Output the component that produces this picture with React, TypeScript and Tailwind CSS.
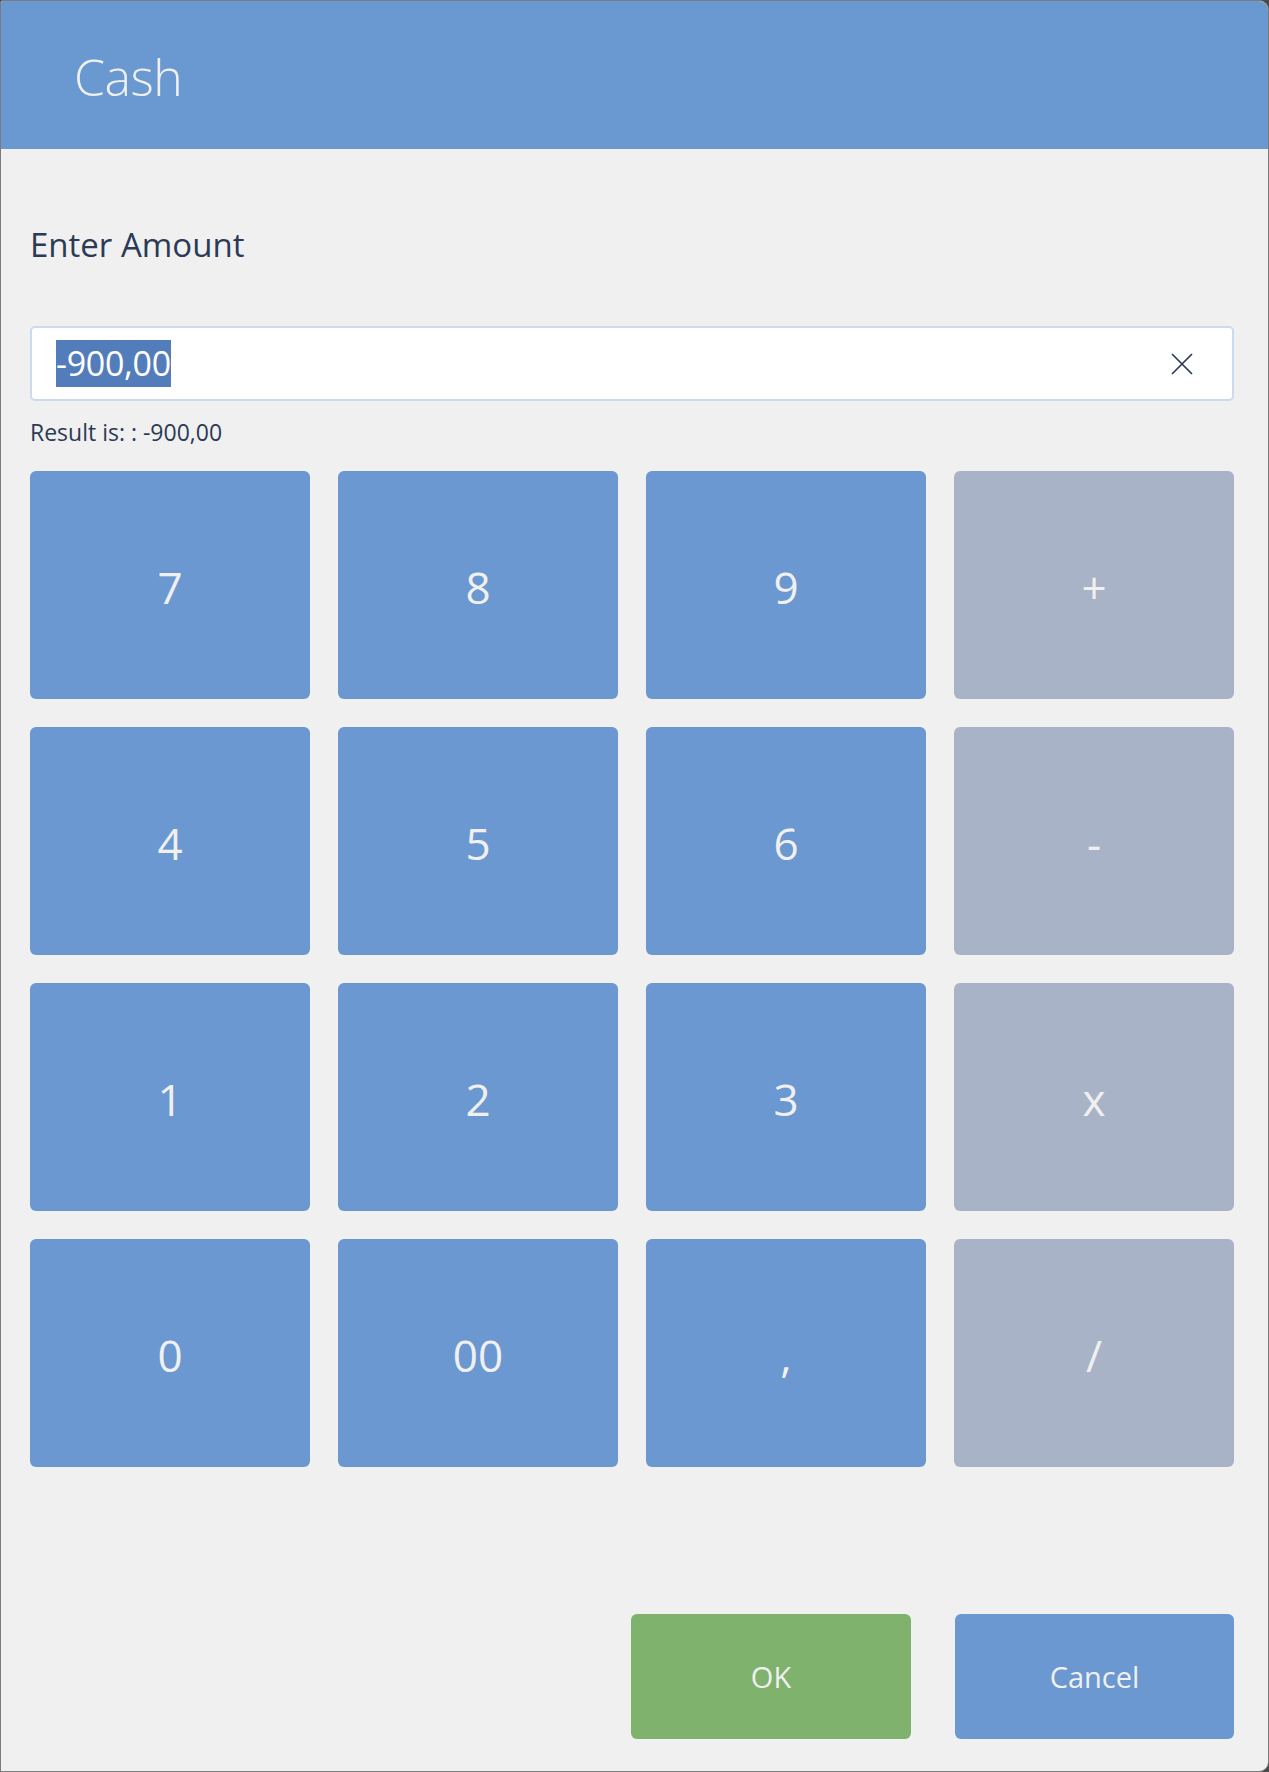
import React from 'react';

const keys = [
  { label: '7', op: false },
  { label: '8', op: false },
  { label: '9', op: false },
  { label: '+', op: true },
  { label: '4', op: false },
  { label: '5', op: false },
  { label: '6', op: false },
  { label: '-', op: true },
  { label: '1', op: false },
  { label: '2', op: false },
  { label: '3', op: false },
  { label: 'x', op: true },
  { label: '0', op: false },
  { label: '00', op: false },
  { label: ',', op: false },
  { label: '/', op: true },
];

const font = { fontFamily: '"Open Sans", "Noto Sans", Arial, sans-serif' };

const App = () => {
  return (
    <div className="w-[1269px] h-[1772px] bg-[#4a4a4a]" style={font}>
      <div className="w-full h-full flex flex-col bg-[#f0f0f0] border border-[#7b7b7b] rounded-tr-[10px] rounded-br-[10px] rounded-tl-[3px] overflow-hidden">
        <div className="h-[148px] shrink-0 bg-[#6a98d0] flex items-center pl-[73px] pt-[4px]">
          <span className="text-[50px] font-light text-[#f0f0f0] leading-none tracking-[-0.5px]">Cash</span>
        </div>

        <div className="flex-1 flex flex-col pl-[29px] pr-[34px]">
          <div className="mt-[79px] text-[33px] leading-none text-[#2b3a55]">Enter Amount</div>

          <div className="mt-[65px] h-[75px] bg-white border-2 border-[#cbdaee] rounded-[5px] flex items-center pl-[24px] pr-[39px]">
            <div className="flex-1">
              <span className="bg-[#537dba] text-white text-[34px] leading-[47px] inline-block tracking-[-0.3px]">-900,00</span>
            </div>
            <svg width="22" height="22" viewBox="0 0 22 22" className="shrink-0">
              <path d="M1 1 L21 21 M21 1 L1 21" stroke="#2b3a55" strokeWidth="1.7" fill="none" />
            </svg>
          </div>

          <div className="mt-[20px] text-[23px] leading-none text-[#2b3a55]">Result is: : -900,00</div>

          <div className="mt-[27px] grid grid-cols-4 gap-[28px]">
            {keys.map((k) => (
              <button
                key={k.label}
                className={`h-[228px] rounded-[6px] flex items-center justify-center pt-[4px] text-[44px] text-[#f0f0f0] ${
                  k.op ? 'bg-[#a9b3c7]' : 'bg-[#6b98d0]'
                }`}
              >
                {k.label}
              </button>
            ))}
          </div>

          <div className="mt-[147px] flex justify-end gap-[44px]">
            <button className="w-[280px] h-[125px] rounded-[6px] bg-[#7eb26d] text-[#f0f0f0] text-[29px] flex items-center justify-center">
              OK
            </button>
            <button className="w-[279px] h-[125px] rounded-[6px] bg-[#6b98d0] text-[#f0f0f0] text-[29px] flex items-center justify-center">
              Cancel
            </button>
          </div>
        </div>
      </div>
    </div>
  );
};

export default App;
